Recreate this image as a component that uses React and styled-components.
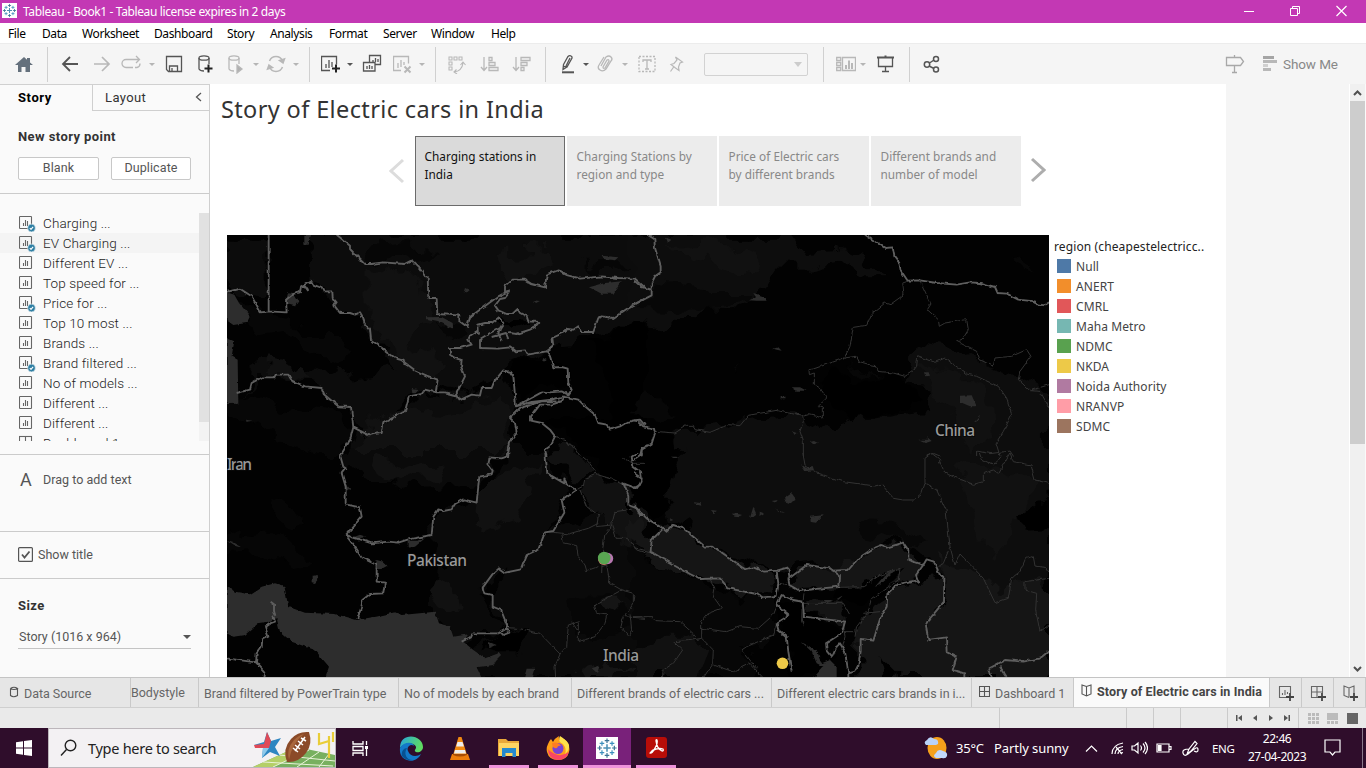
import React from "react";
import styled, { createGlobalStyle } from "styled-components";

const Global = createGlobalStyle`
  * { box-sizing: border-box; }
  html, body { margin: 0; padding: 0; overflow: hidden; background: #fff; }
  svg { display: block; flex: none; }
`;

const UI = `Roboto, "Liberation Sans", sans-serif`;
const BOOK = `"Noto Sans", "DejaVu Sans", sans-serif`;

const Window = styled.div`
  width: 1366px;
  height: 768px;
  display: flex;
  flex-direction: column;
  font-family: ${UI};
  color: #333;
  white-space: nowrap;
`;

/* Title and menus */
const TitleBar = styled.header`
  height: 23px;
  flex: none;
  display: flex;
  align-items: center;
  background: #c338b4;
  color: #fff;
  padding: 0 19px 2px 2px;
  font: 12px ${BOOK};
  letter-spacing: -0.38px;
`;
const TitleText = styled.span`
  margin: 2px auto 0 6px;
`;
const WindowButtons = styled.div`
  display: flex;
  gap: 35px;
`;
const MenuBar = styled.nav`
  height: 20px;
  flex: none;
  display: flex;
  align-items: center;
  gap: 16px;
  padding: 1px 8px 0;
  background: #fff;
  color: #000;
  font: 12px ${BOOK};
`;
const MenuItem = styled.span`
  width: ${(p) => p.$w}px;
  letter-spacing: -0.4px;
`;

/* Toolbar */
const Toolbar = styled.div`
  height: 41px;
  flex: none;
  display: flex;
  align-items: center;
  background: #f5f5f5;
  border-top: 1px solid #ececec;
`;
const ToolSvg = styled.svg`
  margin-left: ${(p) => p.$ml}px;
  width: 20px;
  height: 20px;
  fill: none;
  stroke: ${(p) => (p.$off ? "#b8b8b8" : "#555")};
  stroke-width: ${(p) => p.$sw || 1.3};
`;
const Divider = styled.i`
  flex: none;
  width: 1px;
  height: 35px;
  margin-left: ${(p) => p.$ml}px;
  background: #d0d0d0;
`;
const Caret = styled.i`
  flex: none;
  margin: 1px 0 0 ${(p) => p.$ml}px;
  border: 3px solid transparent;
  border-top: 3.5px solid ${(p) => (p.$off ? "#b5b5b5" : "#555")};
  border-bottom: 0;
`;
const FitBox = styled.div`
  flex: none;
  width: 104px;
  height: 23px;
  margin-left: 17px;
  border: 1px solid #d2d2d2;
  border-radius: 2px;
  display: flex;
  justify-content: flex-end;
  align-items: center;
  padding-right: 5px;
`;
const FitCaret = styled.i`
  border: 4px solid transparent;
  border-top: 5px solid #ccc;
  border-bottom: 0;
`;
const ShowMe = styled.div`
  flex: none;
  display: flex;
  align-items: center;
  gap: 6px;
  margin-left: 18px;
  font-size: 13.5px;
  letter-spacing: -0.1px;
  color: #888;
`;

/* Body */
const Body = styled.main`
  height: 593px;
  flex: none;
  display: flex;
  overflow: hidden;
`;
const Sidebar = styled.aside`
  width: 210px;
  flex: none;
  background: #fafafa;
  border-right: 1px solid #cfcfcf;
  border-top: 1px solid #d0d0d0;
  display: flex;
  flex-direction: column;
`;
const PaneTabs = styled.div`
  height: 26px;
  display: flex;
  font-size: 13px;
`;
const PaneTab = styled.div`
  display: flex;
  align-items: center;
  width: ${(p) => p.$w}px;
  padding: 0 7px ${(p) => (p.$active ? 2 : 1)}px ${(p) => p.$pl}px;
  justify-content: space-between;
  font-weight: ${(p) => (p.$active ? 700 : 400)};
  color: ${(p) => (p.$active ? "#000" : "#333")};
  letter-spacing: ${(p) => (p.$active ? 0.6 : 0.4)}px;
  border-left: ${(p) => (p.$active ? 0 : "1px solid #cfcfcf")};
  border-bottom: ${(p) => (p.$active ? 0 : "1px solid #cfcfcf")};
`;
const PaneSection = styled.section`
  height: ${(p) => p.$h}px;
  flex: none;
  border-bottom: ${(p) => (p.$last ? 0 : "1px solid #cbcbcb")};
  padding: ${(p) => p.$pad || 0};
`;
const PaneHeading = styled.h3`
  margin: 0;
  font-size: 13px;
  line-height: 16px;
  font-weight: 700;
  letter-spacing: 0.42px;
  color: #333;
`;
const PaneButtons = styled.div`
  display: flex;
  gap: 12px;
  margin-top: 12px;
`;
const PaneButton = styled.div`
  width: ${(p) => p.$w}px;
  height: 23px;
  border: 1px solid #c8c8c8;
  border-radius: 2px;
  background: #fff;
  text-align: center;
  font-size: 12.5px;
  line-height: 20px;
  color: #555;
  letter-spacing: 0.1px;
`;
const SheetPane = styled.div`
  height: 228px;
  overflow: hidden;
  display: flex;
`;
const SheetList = styled.div`
  flex: 1;
`;
const SheetRow = styled.div`
  height: 20px;
  display: flex;
  align-items: center;
  padding: 0 0 0 19px;
  gap: 7px;
  font-size: 13.5px;
  font-weight: 300;
  letter-spacing: 0.12px;
  color: #222;
  background: ${(p) => (p.$hover ? "#f4f4f4" : "transparent")};
`;
const ListScroll = styled.div`
  width: 10px;
  background: #f3f3f3;
`;
const ListThumb = styled.div`
  height: 209px;
  background: #e1e1e1;
`;
const TextObject = styled.div`
  display: flex;
  align-items: center;
  gap: 12px;
  height: 49px;
  padding-left: 20px;
  font-size: 12.5px;
  letter-spacing: 0.02px;
  color: #555;
`;
const LetterA = styled.span`
  font: 400 18px ${UI};
  width: 11px;
  color: #555;
`;
const CheckLine = styled.div`
  height: 46px;
  display: flex;
  align-items: center;
  gap: 5px;
  padding: 0 0 1px 18px;
  font-size: 12.5px;
  color: #555;
`;
const SizeSelect = styled.div`
  width: 173px;
  height: 24px;
  margin-top: 11px;
  display: flex;
  justify-content: space-between;
  align-items: center;
  padding: 0 0 0 1px;
  border-bottom: 1px solid #c4c4c4;
  font-size: 12.5px;
  letter-spacing: 0px;
  color: #555;
`;
const SizeCaret = styled.i`
  border: 4px solid transparent;
  border-top: 4px solid #555;
  border-bottom: 0;
`;

/* Story canvas */
const Canvas = styled.div`
  width: 1016px;
  background: #fff;
  font-family: ${BOOK};
`;
const StoryTitle = styled.h1`
  margin: 0;
  padding: 10px 0 0 11px;
  height: 52px;
  font-size: 23.5px;
  line-height: 30px;
  font-weight: 400;
  color: #333;
  letter-spacing: 0.37px;
`;
const Navigator = styled.div`
  display: flex;
  align-items: center;
  justify-content: center;
  height: 70px;
  gap: 2px;
`;
const NavArrow = styled.svg`
  width: 16px;
  height: 28px;
  margin: ${(p) => (p.$left ? "0 8px 0 0" : "0 2px 2px 7px")};
  fill: none;
  stroke-width: 3;
`;
const StoryPoint = styled.div`
  width: 150px;
  height: 70px;
  padding: ${(p) => (p.$active ? "10px 9px" : "11px 10px")};
  border: ${(p) => (p.$active ? "1px solid #6b6b6b" : 0)};
  background: ${(p) => (p.$active ? "#dadada" : "#ececec")};
  color: ${(p) => (p.$active ? "#111" : "#888")};
  font-size: 11.8px;
  line-height: 18px;
  letter-spacing: 0.02px;
  white-space: pre-line;
`;
const Dashboard = styled.div`
  display: flex;
  margin: 29px 0 0 17px;
`;
const Legend = styled.div`
  margin-left: 5px;
  padding-top: 2px;
  font-size: 12px;
  color: #444;
`;
const LegendTitle = styled.div`
  height: 19px;
  line-height: 20px;
  color: #222;
  letter-spacing: 0.12px;
`;
const LegendItem = styled.div`
  height: 20px;
  display: flex;
  align-items: center;
  padding-left: 3px;
  gap: 5px;
  letter-spacing: 0.08px;
`;
const Swatch = styled.i`
  width: 14px;
  height: 14px;
  background: ${(p) => p.$c};
`;
const Gutter = styled.div`
  flex: 1;
  background: #f5f5f5;
  border-right: 1px solid #fff;
`;
const ScrollBar = styled.div`
  width: 16px;
  background: #f0f0f0;
  display: flex;
  flex-direction: column;
  align-items: center;
  border-right: 1px solid #fafafa;
`;
const ScrollThumb = styled.div`
  width: 15px;
  height: 343px;
  margin-bottom: auto;
  background: #cdcdcd;
`;

/* Sheet tabs and status */
const SheetTabs = styled.div`
  height: 31px;
  flex: none;
  display: flex;
  border-top: 1px solid #c4c4c4;
  border-bottom: 1px solid #cfcfcf;
  background: #e6e6e6;
`;
const SheetTab = styled.div`
  width: ${(p) => p.$w}px;
  display: flex;
  align-items: center;
  gap: ${(p) => p.$gap || 5}px;
  overflow: hidden;
  padding: ${(p) => (p.$active ? 0 : 1)}px 0 ${(p) => (p.$active ? 2 : 0)}px ${(p) => (p.$pl === undefined ? 5 : p.$pl)}px;
  border-right: 1px solid #c9c9c9;
  background: ${(p) => (p.$active ? "#fafafa" : "transparent")};
  color: ${(p) => (p.$active ? "#444" : "#666")};
  font-size: 12.5px;
  font-weight: ${(p) => (p.$active ? 700 : 400)};
  letter-spacing: ${(p) => (p.$active ? 0.12 : -0.03)}px;
`;
const TabIcon = styled.svg`
  width: 11px;
  height: ${(p) => p.$h || 12}px;
  fill: none;
  stroke: #555;
  stroke-width: 1.1;
  margin-bottom: 2px;
`;
const StatusBar = styled.div`
  height: 20px;
  flex: none;
  display: flex;
  justify-content: flex-end;
  background: #eaeaea;
`;
const StatusCell = styled.div`
  width: ${(p) => p.$w}px;
  border-left: 1px solid #cbcbcb;
  display: flex;
  align-items: center;
  justify-content: space-evenly;
`;

/* Taskbar */
const Taskbar = styled.footer`
  height: 40px;
  flex: none;
  display: flex;
  background: #2f0d2b;
  color: #fff;
  font-family: ${BOOK};
`;
const TaskButton = styled.div`
  width: ${(p) => p.$w}px;
  height: 40px;
  display: flex;
  align-items: center;
  justify-content: center;
  background: ${(p) => (p.$active ? "#79217a" : "transparent")};
  border-bottom: ${(p) => (p.$open ? "3px solid #ee92da" : 0)};
  padding-top: ${(p) => (p.$open ? 2 : 0)}px;
  margin-left: ${(p) => p.$ml || 0}px;
`;
const SearchBox = styled.div`
  width: 288px;
  display: flex;
  align-items: center;
  background: #f3f1f3;
  border: 1px solid #bcb6bb;
  color: #222;
  font-size: 14.5px;
  letter-spacing: -0.28px;
  padding-left: 11px;
`;
const SearchText = styled.span`
  margin-left: 11px;
  width: 170px;
`;
const Tray = styled.div`
  margin-left: auto;
  display: flex;
  align-items: center;
  font-size: 13px;
`;
const TrayText = styled.span`
  margin-left: ${(p) => p.$ml}px;
  width: ${(p) => p.$w}px;
  letter-spacing: ${(p) => p.$ls || 0}px;
  font-size: ${(p) => p.$fs || 13}px;
`;
const Clock = styled.div`
  width: 60px;
  margin-left: 11px;
  text-align: center;
  font-size: 12px;
  line-height: 18px;
  letter-spacing: -0.45px;
`;
const TraySvg = styled.svg`
  margin-left: ${(p) => p.$ml}px;
  fill: none;
  stroke: #fff;
  stroke-width: 1.2;
`;
const ShowDesktop = styled.i`
  width: 4px;
  height: 40px;
  margin-left: 21px;
  border-left: 1px solid #8a788a;
`;

const TableauMark = ({ size, bg = "#fff" }) => (
  <svg width={size} height={size} viewBox="0 0 24 24">
    <rect width="24" height="24" fill={bg} />
    <g stroke="#3b7396" strokeWidth="1.3">
      <path d="M12 8v8M8 12h8" stroke="#4d91b5" strokeWidth="1.7" />
      <path d="M12 1.5v5M9.500 4h5M12 17.500v5M9.500 20h5M1.500 12h5M4 9.500v5M17.500 12h5M20 9.500v5" />
      <path d="M6.500 4.500v5M4 7h5M17.500 4.500v5M15 7h5M6.500 14.500v5M4 17h5M17.500 14.500v5M15 17h5" stroke="#3d8fbd" />
    </g>
  </svg>
);

const SheetIcon = ({ used }) => (
  <svg width="17" height="18" viewBox="0 0 17 18" fill="none" stroke="#666" strokeWidth="1.1">
    <rect x="0.5" y="2.500" width="12" height="12" rx="0.6" />
    <path d="M4.500 9v3M6.500 6v6M8.500 7v5" />
    {used && (
      <g>
        <circle cx="12.500" cy="14" r="3.900" fill="#2f7fa3" stroke="#fafafa" strokeWidth="0.6" />
        <path d="M10.800 14l1.200 1.300 2.100-2.500" stroke="#fff" />
      </g>
    )}
  </svg>
);

const DashIcon = () => (
  <svg width="17" height="18" viewBox="0 0 17 18" fill="none" stroke="#666" strokeWidth="1.1">
    <rect x="0.5" y="2.500" width="12" height="12" />
    <path d="M6.500 2v12M0 8.500h12" />
  </svg>
);

const sheets = [
  ["Charging ...", 1], ["EV Charging ...", 1], ["Different EV ..."], ["Top speed for ..."],
  ["Price for ...", 1], ["Top 10 most ..."], ["Brands ..."], ["Brand filtered ...", 1],
  ["No of models ..."], ["Different ..."], ["Different ..."],
];

const legend = [
  ["Null", "#4e79a7"], ["ANERT", "#f28e2b"], ["CMRL", "#e15759"], ["Maha Metro", "#76b7b2"],
  ["NDMC", "#59a14f"], ["NKDA", "#edc948"], ["Noida Authority", "#b07aa1"],
  ["NRANVP", "#ff9da7"], ["SDMC", "#9c755f"],
];

const menus = [
  ["File", 18], ["Data", 24], ["Worksheet", 56], ["Dashboard", 57], ["Story", 27],
  ["Analysis", 43], ["Format", 38], ["Server", 32], ["Window", 44], ["Help", 26],
];

/* Map tiles are drawn at three units per pixel and placed by tile. */
const tiles = [
  {
    at: [225, 233],
    shade: [
      ["#0c0c0c", "M5 5H125V150L95 190L5 160zM245 5H1260V330L1180 290L1120 300L1050 340L970 345L860 400L800 450L720 490L630 470L560 485L480 590L400 580L340 510L280 465L190 430L90 430L40 500L80 420L130 380L180 400L250 430L330 390L400 440L520 410L440 320L400 240L330 230L290 170L250 120z"],
      ["#070707", "M40 180L100 240L200 250L240 300L330 300L380 360L290 380L200 300L120 310L60 270zM5 500L100 490L200 530L330 540L370 590L340 669H290L160 620L90 570L5 540z"],
      ["#0c0c0c", "M385 585L470 600L480 575L545 535L600 480L700 500L800 465L840 420L870 520L860 669H370z"],
      ["#111", "M430 110L520 120L600 160L610 250L560 330L640 380L620 430L560 400L470 330L430 240zM800 60L960 50L980 90L900 130L820 110zM400 590L540 530L620 560L700 540L760 500L830 490L850 560L840 669H380zM130 370L210 390L260 450L180 420L120 420z"],
      ["#060606", "M420 40L560 20L620 70L520 90L440 80zM1060 80L1200 90L1180 120L1090 120zM620 270L720 290L700 340L640 310z"],
      ["#000", "M870 400L970 360L1030 410L1040 480L950 470L880 510zM1100 330L1260 260V669H1090L1010 600L940 550L1120 550L1180 500L1150 420zM820 260L900 250L920 270L850 290z"],
    ],
    water: "M5 178L28 185L42 210L75 250L65 270L25 276L5 262zM5 315L28 325L20 370L38 380L40 512L5 513zM190 178L205 180L220 205L210 220L180 212zM238 5h18l-8 30h-10zM603 253L650 252L683 270L685 288L650 270L610 262zM1092 163L1140 150L1190 145L1165 182L1130 182zM1130 68L1180 73L1170 82L1135 78zM720 165l12 5-8 8-8 0zM925 202l20 2-12 6zM560 468l20 3-8 10-10 0zM60 560l22 3-20 4zM955 372l10 6-8 8-5-6z",
    major: "M131 5V235M5 177L45 167L80 190L107 238L131 235L185 238L183 200L205 183L225 178L228 160L238 155L258 143L265 155L290 165L295 175L322 175L323 195L335 208L328 218L345 240L375 240L390 245L405 238L415 255L418 270L435 290L438 320L515 378L530 382L570 412L605 428L638 440L632 478M230 157l10 3 10 14M335 5L375 38V48L418 93H438L475 88L538 93L560 82L583 105L600 130H608L610 195H635L637 243L700 247V262L727 282L735 252L820 190L838 180L855 175L840 195L825 198L810 218L820 232L845 243H862L878 228L885 240L905 250L910 265L943 267L930 282L915 290L875 303L850 300M762 290L735 308L730 320L740 335L705 345L675 345V365L690 375L710 380L708 400L720 430L695 480L703 502L740 485L765 488L770 465L800 465L808 445L835 412L855 417L865 430L873 520L910 500L955 475L975 478L1010 475L1030 485L1040 470L1030 450L1028 407L1010 402L985 403L975 370L965 355L985 340L982 315L1010 302L1028 288L1045 290L1060 280L1068 297H1105L1113 275L1120 255L1130 250L1165 255L1205 228L1260 197M840 180V158L860 140H900L920 153L960 163L965 125L998 112L1020 125L1065 137L1130 130L1180 135L1230 137L1260 163M762 305L760 275L780 270L800 270L822 253L835 270L825 285L795 300L765 318V345L820 347L855 343L870 355L900 352L908 365L965 355M825 285L820 300L830 325M850 318L843 300L800 312M35 480L75 470L80 450L110 433H148L152 425L190 425L200 443L240 460L290 465L298 485L340 520L378 522L385 583L432 607L445 603L470 600L475 570L540 535L552 490L590 483L600 470L632 478L660 478L695 487M385 583L378 610L370 630L345 669M845 669L852 630L875 600L870 570L855 555L885 525L950 505L1010 505L1020 490M1010 505L980 515L945 515L918 550V563L950 570L975 590L990 610L975 640L960 650L965 669M873 520L920 507L980 500L1015 490M1015 490L1060 500L1080 520L1110 545L1120 570L1145 575L1155 590L1185 580L1205 568L1225 562L1245 560L1260 577M1250 645v25",
    minor: "M990 610L1020 620L1030 635L1050 645L1065 669",
  },
  {
    at: [630, 233],
    shade: [
      ["#0d0d0d", "M0 5H480L520 60L620 50L700 70L770 130L720 130L640 90L520 110L430 110L380 190L330 230L220 225L180 262L130 260L60 280L0 270zM130 590L230 590L290 580L350 550L430 540L500 540L590 580L680 560L790 540L900 530L920 470L830 460L850 400L860 330L1000 350L1060 400L1180 440L1257 480V669H130z"],
      ["#070707", "M80 160L250 180L370 180L360 210L200 230L40 225zM20 480L60 470L80 495L150 540L90 555L0 550zM1140 70L1180 80L1220 110L1170 95zM640 400L700 410L760 430L680 420zM310 425l30-18-10 14z"],
      ["#111", "M880 400L1000 420L1080 480L1090 600L1020 650L960 560L920 460zM100 40L250 30L400 60L370 120L200 80z"],
      ["#000", "M30 600L120 605L140 669H10zM560 440L800 430L870 500L790 530L680 560L600 510z"],
    ],
    water: "M357 202L378 193L370 180L400 190L410 203L380 203zM430 347L445 343L455 353L440 350zM485 463L510 463L530 473L500 473zM452 491l10 0 2 8-12 0zM493 535l20 10-12 4zM485 595l15 5-8 6zM540 625l15-4 12 6-14 10zM882 418l14 0 4 10-14 2zM990 488L1025 487L1040 520L1020 520L990 507zM1030 570l20-22-6 15zM865 620l30 0-4-8 14 12-18 6zM105 14l18 5-12 10z",
    major: "M52 5L73 18L75 45L92 100V118L75 130L65 150V187L40 200L0 220M0 140L15 145L35 162L65 170M705 5L765 45L788 43L793 70L808 90L812 112L833 143L870 142L920 150L980 155L1020 148L1050 150L1095 162L1103 180L1130 182L1165 200L1215 205L1217 213L1245 217L1257 208M0 560L25 565L40 580L72 587L75 600L65 632L35 650L30 669",
    minor: "M833 145L818 150L822 185L780 215L765 210L725 242L710 277L670 283L660 340L643 375L550 408L537 410L538 425L553 420V455L570 465L590 495L565 520L580 525V555L535 545L518 550L440 532L355 547L330 578L295 575L240 598L195 590L190 577L170 577L135 600L75 595M643 375L678 370L685 385L720 395L735 398L745 415L790 420L825 430L848 415L860 400L863 368L915 388L945 375L1010 423L1040 430L1105 460L1130 495L1145 545L1120 595L1098 630L1110 669M870 143L903 213L892 230L925 260L928 280L945 270L1010 260L1015 290L1000 315L980 325L1040 355L1050 380L1090 400L1095 375L1145 370L1190 350L1203 370L1170 415L1165 440L1200 473L1230 475L1250 510L1257 525M1200 473l57-18M518 550L520 565L510 595L520 625L520 669M890 669l20-8 20 8M1040 669v-15l40 8 60-8 10 15",
  },
  {
    at: [225, 450],
    shade: [
      ["#0a0a0a", "M360 0H850L790 30L800 70L760 100L600 110L560 140L500 90L420 90L380 60zM850 0H970L980 70L1045 115L1010 190L940 300L880 355L820 360L775 415L840 520L780 560L680 550L620 490L640 350L610 270L640 190L780 150zM850 530L1260 530V684H750L740 600L800 560zM980 245L1120 200L1260 310V684H1000L940 550L850 520L800 430L960 260z"],
      ["#111", "M450 20L560 50L640 30L650 80L590 80L530 100L440 60zM1065 110L1120 70L1200 110L1260 180V300L1180 280L1100 170zM640 380L680 400L700 490L650 480L610 420zM970 20L1050 0L1100 60L1050 110zM850 50L940 30L890 200L750 250L760 150z"],
      ["#060606", "M5 230L60 250L130 240L190 280L250 340L180 350L120 300L5 310zM120 140L190 160L250 210L190 240zM1030 440L1160 440L1240 520L1150 560L1050 570z"],
      ["#151515", "M1130 450L1190 460L1160 490L1125 480zM1060 660L1150 620L1210 650L1150 684H1050z"],
      ["#000", "M1090 0H1260V190L1210 150L1190 100L1130 70zM800 560L850 535L930 550L870 610L820 610L760 600z"],
    ],
    water: "M5 408L30 425L75 433L110 410L150 400L178 408L190 470L240 488L330 492L395 510L450 500L510 487L530 495L630 485L642 520L675 530L685 560L730 553L715 575L745 600L780 625L825 608L805 645L755 652L770 684H300L312 650L270 600L200 575L165 545L155 505L130 515L100 520L60 555L25 560L5 550zM260 378l18-3 2 12-10 12-10-2zM455 330l20 5 12 12-18 10-18 0zM548 272L575 272L600 265L570 290L548 293zM360 98l18 22-16-4zM385 262l20-8 20 7-20 3zM5 270l18 5 25 15-20-5zM900 684l8-28 20 0-8 28zM1100 655l24-8-8 22zM790 575l25 10-22 10zM820 605l8 10-20 20z",
    major: "M365 0L345 15L355 50L362 55L350 70L362 110V163L405 172L410 200L362 255L385 285L410 323L455 345V395L480 398L475 430L435 432L412 450L408 475L397 507M362 255L440 280L490 275L520 278L550 268L620 255L625 200L640 178L655 183L680 178L690 162L715 148L755 158L763 80L800 73L803 62L790 45L793 22L830 25L850 18V0M960 0L967 70L1018 100V88L1028 105L1053 120L1010 150L1018 188L985 243L960 247L940 298L905 315L888 358L840 368L822 355L802 373L773 413L778 430L803 435V470L828 480L850 535M710 575L735 562L740 550L820 550L845 535L853 548L835 555L825 545M5 625L93 637L95 610L110 590L112 568L130 560L120 530L135 520L150 515L145 500M93 637L118 665L115 684M137 455l10 8 0 20 4 14M1250 0L1220 20L1225 50L1245 65L1250 95L1235 115L1195 100L1210 135V165L1235 175L1245 195H1260",
    minor: "M1050 0L1090 35L1120 75L1165 88L1205 108M1053 120L1075 108L1080 85L1115 68M1065 120L1085 170L1120 195L1115 230L1160 225M970 245L1030 252L1090 235L1120 220M1010 250L1015 278L1055 287L1060 320L1080 345L1085 362L1120 350M1160 225L1140 250L1133 300L1130 370M1160 225L1170 185L1220 178M1160 225L1175 265L1210 265L1235 300L1260 308M1130 350L1145 345L1155 400L1190 420L1225 430V460L1200 500L1260 505M1190 420L1108 465L1115 490L1145 495L1140 520L1110 560L1060 575V515L1030 525L1025 590L1005 612L945 550L880 535L850 533M1195 500L1188 530L1210 558L1220 540L1215 490M1005 612L990 650L992 684M1040 515l20 30M1195 25l30 15 35 0",
  },
  {
    at: [630, 450],
    shade: [
      ["#0d0d0d", "M170 0H1257V684H950L900 580L940 470L945 390L890 330L820 270L740 290L680 330L620 365L530 340L450 350L380 360L320 330L250 290L160 230L120 215L100 110z"],
      ["#151515", "M0 200L65 270L120 225L240 290L350 360L430 370L440 430L340 430L240 390L150 370L0 280zM480 380L530 350L600 355L740 290L820 290L870 345L850 390L760 410L620 410L480 415zM530 460L640 460L660 500H530zM700 490L780 430L850 400L940 380L930 470L900 520L900 570L950 570L1000 684H670V560zM940 330L1060 370L1130 440L1170 400L1220 380L1257 410V684H970L890 560L940 450z"],
      ["#070707", "M0 290L60 320L170 380L290 430L430 440L440 560L340 600L380 684H0zM690 210L790 220L900 270L850 280L710 240z"],
      ["#111", "M0 600L100 560L180 560L230 600L200 684H0zM970 20L1200 80L1190 180L1110 300L1040 280L1020 130z"],
      ["#000", "M0 0H150L120 150L70 210L0 170zM1170 200L1230 150L1257 145V240L1190 245zM445 450L510 460L530 500L640 520L580 590L610 630L620 684H480L470 560zM630 420L740 380L800 350L800 390L740 430L690 470L620 440zM740 600L790 650L820 684H760z"],
    ],
    water: "M485 130L500 150L480 160L460 152L470 140zM425 153l18-3-6 8zM435 175l28 15-12-3zM540 200l38-4-20 22-15-2zM370 170l8 20-18 14zM390 185l12 5-14 8zM310 190l25 4-4 8-18-2zM190 157l22 2 2 8-18-4zM243 180l18 2-10 8zM120 205l10 5-9 4zM513 43l15 10 20-5 4 12-26 4zM125 20h15l3 8zM515 577L560 600L575 640L600 630L620 650V684H550L580 650L560 640L545 605zM580 450h30l-20 8zM620 447l20-12-14 14zM735 410l30-35 40-20-55 50zM515 460l6 70-8-20z",
    major: "M0 170L15 170L50 205L100 235L65 270L62 305L85 318L180 372L210 387L270 385L295 415L380 432L395 442L440 438L445 400L440 362L400 365L370 352L345 358L300 325L250 290L225 290L160 235L130 225L110 245L98 235M440 362L475 352L478 385L530 345L600 355L630 378L628 410L545 418L510 423L478 405L475 385M605 362L655 360L685 325L735 292L752 285L770 293L820 278L835 300L835 330L880 345L890 328L912 335L930 375L943 380L942 455L900 505L888 530L895 570L948 562L950 605L980 620L968 660L1003 670V684M880 345L858 375L868 402L855 392L800 403L772 432L770 470L752 500L730 572L692 567V605L685 645L675 665L655 670L645 605L630 580L620 590L607 620L590 600L588 580L635 550L645 515L522 500L518 455L490 450L455 435L440 465L478 495L440 520L445 540L470 560L475 605L485 665M655 670V684M0 120L30 105L35 85L5 65V35L35 15V0M1085 684L1078 655L1125 630L1180 635L1230 625L1257 603M1110 650l20 30",
    minor: "M517 0L525 45L560 68L640 95L735 108L755 103L790 145L820 150L850 150L875 130L885 100L885 25L905 10L925 25L945 70L1030 103L1060 95V70L1090 60L1105 70L1140 8L1150 35L1203 45L1215 90L1257 100M885 100L920 120L948 180L960 290L940 340L925 350M960 290L975 345L990 312L1060 385L1095 458L1135 445L1145 385L1170 365L1187 325L1210 320L1215 348L1245 352L1257 370M1257 385L1185 395V420L1220 430L1217 480L1230 545L1257 525M1045 0L1055 28L1090 45L1110 20M0 290L60 305M240 387L255 415L250 440L275 475L235 490L215 515V565L175 572L130 575L158 600L130 640L100 660L97 684M215 535L290 545L330 530L385 535L430 495L440 470M0 500L65 500L75 512L150 515L200 560M215 565L250 600L248 640L220 684M250 645L310 665L360 640L400 684M440 520L430 555L350 590L335 600L380 655M522 430L518 460L640 460L660 495M630 412L700 410L740 380L810 355L805 390L725 445L715 485L680 530L675 560M640 545H675M700 490L750 485M640 520L645 560L635 600M440 405L475 400M0 425l15 10-10 65",
  },
];

const MapView = () => (
  <svg width="822" height="442" viewBox="227 235 822 442">
    <defs>
      <filter id="coast" x="0" y="0" width="100%" height="100%" colorInterpolationFilters="sRGB">
        <feTurbulence type="fractalNoise" baseFrequency="0.16" numOctaves="2" seed="4" />
        <feDisplacementMap in="SourceGraphic" scale="3.600" xChannelSelector="R" yChannelSelector="G" />
      </filter>
      <filter id="relief" x="0" y="0" width="100%" height="100%" colorInterpolationFilters="sRGB">
        <feTurbulence type="fractalNoise" baseFrequency="0.04" numOctaves="3" seed="9" />
        <feDisplacementMap in="SourceGraphic" scale="30" xChannelSelector="R" yChannelSelector="G" />
      </filter>
      {tiles.map((t, i) => (
        <clipPath id={`tile${i}`} key={i}>
          <rect x={t.at[0] === 225 ? 0 : 12} y={t.at[1] === 233 ? 0 : 9} width="1262" height="690" />
        </clipPath>
      ))}
    </defs>
    <rect x="227" y="235" width="822" height="442" fill="#000" />
    <g filter="url(#relief)">
      <rect x="207" y="215" width="862" height="482" fill="#020202" />
      {tiles.map((t, i) => (
        <g key={i} transform={`translate(${t.at}) scale(.33333)`}>
          {t.shade.map(([c, d], k) => <path key={k} d={d} fill={c} />)}
        </g>
      ))}
    </g>
    <g filter="url(#coast)">
      <rect x="217" y="225" width="842" height="462" fill="none" />
      {tiles.map((t, i) => (
        <g key={i} transform={`translate(${t.at}) scale(.33333)`} fill="none" strokeLinejoin="round">
          <path d={t.water} fill="#2d2d2d" />
          <path d={t.minor} stroke="#333" strokeWidth="3" clipPath={`url(#tile${i})`} />
          <path d={t.major} stroke="#5e5e5e" strokeWidth="5.600" clipPath={`url(#tile${i})`} />
        </g>
      ))}
    </g>
    <g fontFamily={BOOK} fontSize="15.500" fontWeight="500" fill="#999" stroke="#080808" strokeWidth="2" paintOrder="stroke">
      <text x="227" y="470" textLength="25">Iran</text>
      <text x="407" y="566" textLength="60">Pakistan</text>
      <text x="603" y="661" textLength="36">India</text>
      <text x="935" y="436" textLength="40">China</text>
    </g>
    <circle cx="604" cy="559" r="6" fill="#d37267" />
    <circle cx="607.500" cy="558.500" r="5.700" fill="#b777b0" />
    <circle cx="604.200" cy="558" r="6.300" fill="#59a652" />
    <circle cx="782.500" cy="663.300" r="5.800" fill="#edc948" />
  </svg>
);

const StoryTools = () => (
  <Toolbar>
    <ToolSvg $ml={14}><path d="M1 11l9-8 3 2.700V4h3v4.500l3 2.500h-3v7h-4.500v-5h-4v5H4v-7z" fill="#64707c" stroke="none" /></ToolSvg>
    <Divider $ml={13} />
    <ToolSvg $ml={12} $sw={1.8}><path d="M18 10H3M10 3l-7 7 7 7" /></ToolSvg>
    <ToolSvg $ml={11} $sw={1.7} $off><path d="M3 10h15M11 3l7 7-7 7" /></ToolSvg>
    <ToolSvg $ml={10} $off><path d="M12 13.500H5a4 4 0 010-8h13M15 2l3.500 3.500L15 9M14 13.500h2a4 4 0 003-4" /></ToolSvg>
    <Caret $ml={8} $off />
    <ToolSvg $ml={9}><path d="M2.500 2.500h15v15h-13l-2-2zM5.500 17v-5h8v5M8 14v3" /></ToolSvg>
    <ToolSvg $ml={12}>
      <path d="M3 4v11q1 2 5 2M13 4v6" /><ellipse cx="8" cy="4" rx="5" ry="2.200" />
      <path d="M8.500 14.500h8M12.500 10.500v8" stroke="#222" strokeWidth="2" />
    </ToolSvg>
    <ToolSvg $ml={10} $off>
      <path d="M3 4v11q1 2 5 2M13 4v6" /><ellipse cx="8" cy="4" rx="5" ry="2.200" />
      <path d="M11 11l5 4-5 4z" fill="#b0b0b0" />
    </ToolSvg>
    <Caret $ml={7} $off />
    <ToolSvg $ml={7} $off $sw={1.5}><path d="M3.500 7a7 7 0 0113 0M16.500 13a7 7 0 01-13 0" /><path d="M17 9l-3.500-2.500 5-1.500zM3 11l3.500 2.500-5 1.500z" fill="#b8b8b8" /></ToolSvg>
    <Caret $ml={7} $off />
    <Divider $ml={10} />
    <ToolSvg $ml={11}><path d="M9 16.500H0.500v-14h15v8M5 10v4M8 6v8M11 8v5" /><path d="M11 14.500h8M15 10.500v8" stroke="#222" strokeWidth="2" /></ToolSvg>
    <Caret $ml={6} />
    <ToolSvg $ml={9}><path d="M7.500 8V1.500h11v9h-5M1.500 8.500h11.500v8.500H1.500zM5 12v3M7.500 11v4M10 12v3M11 6v2M13.500 4v4M16 5v3" /></ToolSvg>
    <ToolSvg $ml={11} $off><path d="M8 16.500H0.500v-14h15v7M5 9v5M8 6v7M11 8v3" /><path d="M11.500 12.500l6 6M17.500 12.500l-6 6" strokeWidth="2" /></ToolSvg>
    <Caret $ml={6} $off />
    <Divider $ml={10} />
    <ToolSvg $ml={11} $off><path d="M2 3h3v3H2zM7 3h3v3H7zM12 3h3v3h-3zM2 8h3v3H2zM2 13h3v3H2zM7 18q8-1 9-9M13.500 11L16 8l2.500 3M9.500 15.500L7 18l3 2" strokeWidth="1.100" /></ToolSvg>
    <ToolSvg $ml={13} $off><path d="M4 3v13M1 13l3 3.500L7 13M9 3.500h3v3H9zM9 8.500h6v3H9zM9 13.500h9v3H9z" /></ToolSvg>
    <ToolSvg $ml={12} $off><path d="M4 3v13M1 13l3 3.500L7 13M9 3.500h9v3H9zM9 8.500h6v3H9zM9 13.500h3v3H9z" /></ToolSvg>
    <Divider $ml={13} />
    <ToolSvg $ml={12}><path d="M5.500 10.500L10 2.500q2-2 4 .500l0 1-5 9-3.500-.5zM5.500 10.500l-.5 5 4-2.500M12 4l-4 8" /><path d="M4 18.300h12" strokeWidth="2" /></ToolSvg>
    <Caret $ml={5} />
    <ToolSvg $ml={6} $off><path d="M6 12l5-9q3-2 5 0t0 4l-5 8q-3 3-6 1t-1-5l5-8M8 13l4-7q2-1 2 1l-4 7q-2 1-2-1z" /></ToolSvg>
    <Caret $ml={7} $off />
    <ToolSvg $ml={9} $off><rect x="2" y="2.500" width="16" height="15" strokeDasharray="2 1.500" /><path d="M6 8V6h8v2M10 6v9M8 15h4" /></ToolSvg>
    <ToolSvg $ml={10} $off><path d="M8.500 3l7 5-2.500 1-1.500 4 .500 3.500-3.500-2.500-4.500-3.500 3-1 3-3.500zM7 12.500l-3.500 5" strokeWidth="1.200" /></ToolSvg>
    <FitBox><FitCaret /></FitBox>
    <Divider $ml={15} />
    <ToolSvg $ml={12} $off><path d="M0.700 3.500h4v3h-4zM0.700 8.500h4v3h-4zM0.700 13.500h4v3h-4zM6.500 3.500h13v13h-13z" /><path d="M10 11v4M13 6.500V15M16 9v6" strokeWidth="2" /></ToolSvg>
    <Caret $ml={4} $off />
    <ToolSvg $ml={9}><path d="M2 3.500h17M10.500 1.500v2" strokeWidth="2" /><path d="M3.500 4v8.500h14V4M10.500 13v5M7 17.500h7" /></ToolSvg>
    <Divider $ml={14} />
    <ToolSvg $ml={12} $sw={1.5}><circle cx="5" cy="10.500" r="2.700" /><circle cx="14" cy="5" r="2.500" /><circle cx="14" cy="15.500" r="2.500" /><path d="M7.500 9l4.500-3M7 12l5 2.500" /></ToolSvg>
    <ToolSvg $ml={283} $off><path d="M1.500 3.500h14l3 4-3 4h-14zM9.500 1v2M9.500 11.500v7M7 18.500h5" stroke="#a8a8a8" /></ToolSvg>
    <ShowMe>
      <svg width="14" height="16" fill="#b8b8b8"><path d="M0 0h11v3H0z" fill="#a5a5a5" /><path d="M0 4h14v3H0zM0 12h8v3H0z" /><path d="M0 8h5v3H0z" fill="#d0d0d0" /></svg>
      <span>Show Me</span>
    </ShowMe>
  </Toolbar>
);

const BookGlyph = () => <path d="M5.500 2.500L1 1v9l4.500 2L10 10V1zM5.500 2.500V12" />;

const NewTab = ({ kind }) => (
  <svg width="18" height="17" fill="none" stroke="#666" strokeWidth="1.100">
    {kind === "sheet" && <path d="M8 12.500H1.500v-11h11V8M4.500 8v2M7 5v5M9.500 7v2" />}
    {kind === "dash" && <path d="M8 12.500H1.500v-11h11V8M7 1v11M1.500 7h11" />}
    {kind === "story" && <path d="M7 12.500L2 10.500V1l5 2 5-2v7M7 3v9.500" />}
    <path d="M8 12h8M12 8v8" stroke="#444" strokeWidth="1.800" />
  </svg>
);

const SearchArt = () => (
  <svg width="82" height="38" viewBox="0 0 82 38">
    <path d="M0 38L44 18L82 26V38z" fill="#78b05f" />
    <path d="M0 38L44 18L56 21L20 38z" fill="#b4cf67" />
    <path d="M20 38l36-17M44 38l22-15M66 38l10-13M10 33l70 4M26 26l56 6" stroke="#e9f2d8" strokeWidth="1" />
    <path d="M14 3l4 9 10-3-6 9 5 9-10-4-8 6 1-10-9-3 10-3z" fill="#2e86c1" />
    <path d="M14 3l4 9-2 7-14 0-1-3 10-1z" fill="#e04a57" />
    <path d="M16 19l-7 10 1-10z" fill="#8ec9ea" />
    <path d="M34 33q-5-13 4-23 7-8 18-7 4 12-3 21-8 10-19 9z" fill="#8b4a28" />
    <path d="M36 31q-3-11 5-20 5-5 10-6-12 9-15 26z" fill="#a9673d" />
    <path d="M42 22l10-14M42 16l5 4M45 12l5 4M48 9l5 3M40 19l5 4" stroke="#fff" strokeWidth="1.500" />
    <path d="M66 4v11l10-3M76 7v22M80 3v10" stroke="#e9cd38" strokeWidth="2.200" fill="none" />
  </svg>
);

const WindowsTaskbar = () => (
  <Taskbar>
    <TaskButton $w={48}>
      <svg width="16" height="16" fill="#fff"><path d="M0 2.300l7-1v6.200H0zM8 1.100L16 0v7.500H8zM0 8.500h7v6.200l-7-1zM8 8.500h8V16l-8-1.100z" /></svg>
    </TaskButton>
    <SearchBox>
      <svg width="17" height="18" fill="none" stroke="#222" strokeWidth="1.400"><circle cx="10.500" cy="6.500" r="5.300" /><path d="M6.500 10.500L1 16.500" /></svg>
      <SearchText>Type here to search</SearchText>
      <SearchArt />
    </SearchBox>
    <TaskButton $w={48}>
      <svg width="17" height="17" fill="none" stroke="#fff" strokeWidth="1.300"><path d="M1 1v3h10V1M1 16v-3h10v3M1 6.500h10v4H1zM14.500 1v4M14.500 9v7" /><path d="M13 6h3v3h-3z" fill="#fff" stroke="none" /></svg>
    </TaskButton>
    <TaskButton $w={54}>
      <svg width="24" height="25" viewBox="0 0 24 25">
        <defs><linearGradient id="edge" x1="0" y1="0" x2="1" y2="0.3"><stop offset="0" stopColor="#25a6df" /><stop offset="1" stopColor="#5edb62" /></linearGradient></defs>
        <path d="M1 12C1 4 6 .500 12 .500S24 5 24 11c0 4-4 6-7 5-2-1-1-2 0-4 1-5-11-7-16 0z" fill="url(#edge)" />
        <path d="M1 12C4 6 14 5 15 10c-3-3-8 1-6 5 2 6 9 6 13 3-3 6-9 8-14 6C2 22 .500 17 1 12z" fill="#1379c9" />
        <path d="M8 12c-4 6 0 13 7 12-4 1-9 0-12-4-1-5 2-8 5-8z" fill="#075192" />
      </svg>
    </TaskButton>
    <TaskButton $w={44}>
      <svg width="20" height="23" viewBox="0 0 20 23">
        <path d="M8.500 0h3L17 18H3z" fill="#f28a12" /><path d="M7.500 5h5l1.400 4.500H6.200zM5 13h10l1 3.500H4z" fill="#eee" />
        <path d="M2 17h16l2 6H0z" fill="#ed7d0b" /><path d="M3 17h14v1q-7 3-14 0z" fill="#a74d05" />
      </svg>
    </TaskButton>
    <TaskButton $w={40} $open $ml={7}>
      <svg width="22" height="19"><path d="M0 1h8l2 2h11v15H0z" fill="#e9a83a" /><path d="M1 5h20v13H1z" fill="#ffd563" /><path d="M4 10h14v9h-3.500v-4h-7v4H4z" fill="#2589cf" /></svg>
    </TaskButton>
    <TaskButton $w={40} $open $ml={9}>
      <svg width="24" height="24" viewBox="0 0 24 24">
        <path d="M2 8q1-3 3-5l2 3q2-4 6-6-1 4 3 6 2-1 2-3 7 6 5 13-2 8-11 8T1 16q-1-4 1-8z" fill="#ff9f18" />
        <path d="M2 13q0 10 10 11 8 0 11-8-8 5-14 2T2 13z" fill="#fa4664" />
        <circle cx="12" cy="12.500" r="5.500" fill="#7a43d2" /><path d="M6 7q6-2 9 3-3-1-4 2-5 1-5-5z" fill="#ff7c22" />
        <path d="M14 0q-3 5 3 8 4 5 2 10 5-4 4-9-1-4-9-9z" fill="#ffe24b" />
      </svg>
    </TaskButton>
    <TaskButton $w={48} $open $active $ml={5}><TableauMark size={22} /></TaskButton>
    <TaskButton $w={40} $open $ml={5}>
      <svg width="21" height="21"><rect width="21" height="21" rx="3" fill="#b80d08" /><path d="M4 16q2-3 6-4 4-1 7 0 1 2-1 2-5-2-6-10 0-2 1-1 1 3-2 8-3 6-5 5z" fill="none" stroke="#fff" strokeWidth="1.300" /></svg>
    </TaskButton>
    <Tray>
      <svg width="25" height="24" viewBox="0 0 25 24"><ellipse cx="13" cy="12" rx="9.500" ry="11" fill="#f5a01b" /><path d="M2 9q-3-3 1-5 3-5 7-1 5 0 4 5l-2 1z" fill="#b9d3f8" /><path d="M12 22q-4-2 0-5 2-5 7-2 5 1 4 5-1 3-5 2z" fill="#c2d8fb" /></svg>
      <TrayText $ml={7} $w={29} $ls={-0.2}>35°C</TrayText>
      <TrayText $ml={9} $w={76} $ls={-0.08}>Partly sunny</TrayText>
      <TraySvg $ml={15} width="13" height="9"><path d="M1 7.500L6.500 2 12 7.500" /></TraySvg>
      <TraySvg $ml={13} width="13" height="14"><path d="M1 13Q1 4 12 2M4 13q0-6 8-7.500M7 13q0-3.500 5-4.500M10 13q0-1.500 2-1.500M5 6l6 7" /></TraySvg>
      <TraySvg $ml={7} width="17" height="14"><path d="M1 5h2.500L7 2v10L3.500 9H1zM9.500 4.500q2 2.500 0 5M12 2.500q4 4.500 0 9M14 1q5 6 0 12" /></TraySvg>
      <TraySvg $ml={8} width="16" height="10"><path d="M1 1h12v8H1zM13.500 3.500H15v3h-1.500" /><path d="M2.500 2.500H5v5H2.500z" fill="#fff" /></TraySvg>
      <TraySvg $ml={10} width="18" height="16"><path d="M5 14L7 9 13 1.500l2 2L9 11l-4 3M7 9q-7 0-6 4t5 1q6-5 8-6t2 2-4 1" /></TraySvg>
      <TrayText $ml={12} $w={24} $fs={11.5} $ls={-0.3}>ENG</TrayText>
      <Clock>22:46<br />27-04-2023</Clock>
      <TraySvg $ml={17} width="17" height="18"><path d="M1 1h15v12h-5l-2.500 3L6 13H1z" /></TraySvg>
      <ShowDesktop />
    </Tray>
  </Taskbar>
);

export default function App() {
  return (
    <Window>
      <Global />
      <TitleBar>
        <TableauMark size={15} />
        <TitleText>Tableau - Book1 - Tableau license expires in 2 days</TitleText>
        <WindowButtons>
          <svg width="11" height="12"><path d="M0 6.500h10" stroke="#fff" /></svg>
          <svg width="11" height="12" fill="none" stroke="#fff"><path d="M0.500 3.500h7v7h-7zM2.500 3V1.500h7v7H8" /></svg>
          <svg width="11" height="12" stroke="#fff" strokeWidth="1.200"><path d="M0.500 1l10 10M10.500 1l-10 10" /></svg>
        </WindowButtons>
      </TitleBar>
      <MenuBar>{menus.map(([t, w]) => <MenuItem key={t} $w={w}>{t}</MenuItem>)}</MenuBar>
      <StoryTools />
      <Body>
        <Sidebar>
          <PaneTabs>
            <PaneTab $w={92} $pl={18} $active>Story</PaneTab>
            <PaneTab $w={117} $pl={12}>Layout
              <svg width="7" height="10" fill="none" stroke="#555" strokeWidth="1.300"><path d="M6 1L1.500 5 6 9" /></svg>
            </PaneTab>
          </PaneTabs>
          <PaneSection $h={83} $pad="18px 0 0 18px">
            <PaneHeading>New story point</PaneHeading>
            <PaneButtons><PaneButton $w={81}>Blank</PaneButton><PaneButton $w={80}>Duplicate</PaneButton></PaneButtons>
          </PaneSection>
          <PaneSection $h={261} $pad="19px 0 0">
            <SheetPane>
              <SheetList>
                {sheets.map(([t, used], i) => <SheetRow key={i} $hover={i === 1}><SheetIcon used={used} />{t}</SheetRow>)}
                <SheetRow><DashIcon />Dashboard 1</SheetRow>
              </SheetList>
              <ListScroll><ListThumb /></ListScroll>
            </SheetPane>
          </PaneSection>
          <PaneSection $h={77}><TextObject><LetterA>A</LetterA>Drag to add text</TextObject></PaneSection>
          <PaneSection $h={47}>
            <CheckLine>
              <svg width="15" height="15" fill="none" stroke="#555" strokeWidth="1.200"><rect x="0.600" y="0.600" width="13.800" height="13.800" rx="1" /><path d="M4 7.500l2.500 3 5-6" strokeWidth="1.800" /></svg>
              Show title
            </CheckLine>
          </PaneSection>
          <PaneSection $h={98} $last $pad="19px 0 0 18px">
            <PaneHeading>Size</PaneHeading>
            <SizeSelect>Story (1016 x 964)<SizeCaret /></SizeSelect>
          </PaneSection>
        </Sidebar>
        <Canvas>
          <StoryTitle>Story of Electric cars in India</StoryTitle>
          <Navigator>
            <NavArrow $left viewBox="0 0 16 28" stroke="#dcdcdc"><path d="M14 3L2 14l12 11" /></NavArrow>
            <StoryPoint $active>{"Charging stations in\nIndia"}</StoryPoint>
            <StoryPoint>{"Charging Stations by\nregion and type"}</StoryPoint>
            <StoryPoint>{"Price of Electric cars\nby different brands"}</StoryPoint>
            <StoryPoint>{"Different brands and\nnumber of model"}</StoryPoint>
            <NavArrow viewBox="0 0 16 28" stroke="#adadad"><path d="M2 3l12 11L2 25" /></NavArrow>
          </Navigator>
          <Dashboard>
            <MapView />
            <Legend>
              <LegendTitle>region (cheapestelectricc..</LegendTitle>
              {legend.map(([t, c]) => <LegendItem key={t}><Swatch $c={c} />{t}</LegendItem>)}
            </Legend>
          </Dashboard>
        </Canvas>
        <Gutter />
        <ScrollBar>
          <svg width="15" height="17" fill="none" stroke="#505050" strokeWidth="2"><path d="M4 11l3.500-3.500L11 11" /></svg>
          <ScrollThumb />
          <svg width="15" height="17" fill="none" stroke="#505050" strokeWidth="2"><path d="M4 7l3.500 3.500L11 7" /></svg>
        </ScrollBar>
      </Body>
      <SheetTabs>
        <SheetTab $w={131} $pl={9} $gap={4}><TabIcon><path d="M1.500 2.500v7q3 2.500 7 0v-7M1.500 2.500q3.500-2.500 7 0-3.500 2-7 0" /></TabIcon>Data Source</SheetTab>
        <SheetTab $w={68} $pl={-1}>Bodystyle</SheetTab>
        <SheetTab $w={200}>Brand filtered by PowerTrain type</SheetTab>
        <SheetTab $w={173}>No of models by each brand</SheetTab>
        <SheetTab $w={200}>Different brands of electric cars ...</SheetTab>
        <SheetTab $w={200}>Different electric cars brands in i...</SheetTab>
        <SheetTab $w={102} $pl={7}><TabIcon><path d="M0.500 0.500h10v10h-10zM5.500 0.500v10M0.500 5.500h10" /></TabIcon>Dashboard 1</SheetTab>
        <SheetTab $w={196} $pl={7} $active><TabIcon $h={13}><BookGlyph /></TabIcon>Story of Electric cars in India</SheetTab>
        <SheetTab $w={32} $pl={8}><NewTab kind="sheet" /></SheetTab>
        <SheetTab $w={32} $pl={8}><NewTab kind="dash" /></SheetTab>
        <SheetTab $w={32} $pl={8}><NewTab kind="story" /></SheetTab>
      </SheetTabs>
      <StatusBar>
        <StatusCell $w={127} /><StatusCell $w={27} /><StatusCell $w={27} /><StatusCell $w={47} />
        <StatusCell $w={71}>
          <svg width="7" height="8" fill="#555"><path d="M0 1h1.500v6H0zM6 1v6L2 4z" /></svg>
          <svg width="7" height="8" fill="#555"><path d="M5 1v6L1 4z" /></svg>
          <svg width="7" height="8" fill="#555"><path d="M2 1v6l4-3z" /></svg>
          <svg width="7" height="8" fill="#555"><path d="M5.500 1H7v6H5.500zM1 1v6l4-3z" /></svg>
        </StatusCell>
        <StatusCell $w={68}>
          <svg width="11" height="11" fill="#bbb"><path d="M0 0h3v3H0zM4 0h3v3H4zM8 0h3v3H8zM0 4h3v3H0zM4 4h3v3H4zM8 4h3v3H8zM0 8h3v3H0zM4 8h3v3H4zM8 8h3v3H8z" /></svg>
          <svg width="11" height="11" fill="#bbb"><path d="M0 0h11v7H0zM0 8h3v3H0zM4 8h3v3H4zM8 8h3v3H8z" /></svg>
          <svg width="11" height="11" fill="#666"><path d="M0 0h11v11H0z" /></svg>
        </StatusCell>
      </StatusBar>
      <WindowsTaskbar />
    </Window>
  );
}
